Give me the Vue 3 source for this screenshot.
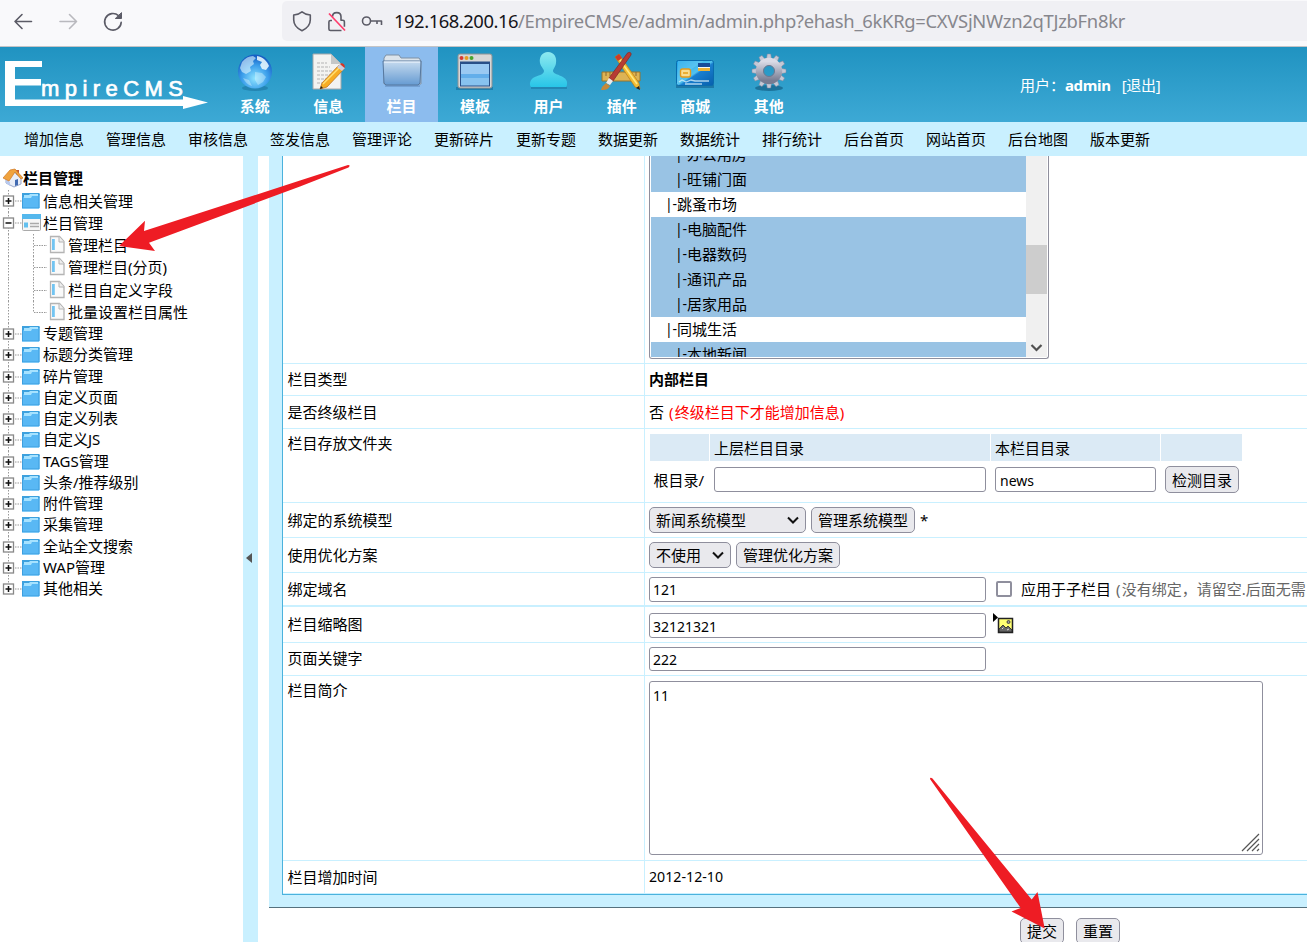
<script setup>
const menus = [
  { t: '系统', i: 'globe' }, { t: '信息', i: 'doc' }, { t: '栏目', i: 'folder', on: true }, { t: '模板', i: 'window' },
  { t: '用户', i: 'user' }, { t: '插件', i: 'tools' }, { t: '商城', i: 'card' }, { t: '其他', i: 'gear' },
]
const subnav = ['增加信息', '管理信息', '审核信息', '签发信息', '管理评论', '更新碎片', '更新专题', '数据更新', '数据统计', '排行统计', '后台首页', '网站首页', '后台地图', '版本更新']
const tree = [
  { t: '信息相关管理', k: 'top' }, { t: '栏目管理', k: 'open' },
  { t: '管理栏目', k: 'sub' }, { t: '管理栏目(分页)', k: 'sub' }, { t: '栏目自定义字段', k: 'sub' }, { t: '批量设置栏目属性', k: 'sub last' },
  ...['专题管理', '标题分类管理', '碎片管理', '自定义页面', '自定义列表', '自定义JS', 'TAGS管理', '头条/推荐级别', '附件管理', '采集管理', '全站全文搜索', 'WAP管理', '其他相关'].map((t, n) => ({ t, k: n === 12 ? 'node end' : 'node' })),
]
const options = [
  { t: '办公用房', s: 1 }, { t: '旺铺门面', s: 1 }, { t: '跳蚤市场' }, { t: '电脑配件', s: 1 }, { t: '电器数码', s: 1 },
  { t: '通讯产品', s: 1 }, { t: '居家用品', s: 1 }, { t: '同城生活' }, { t: '本地新闻', s: 1 },
]
const teeth = Array.from({ length: 12 }, (_, n) => n * 30)
</script>

<template>
  <div class="page">
    <div class="chrome">
      <svg class="nav-icons" width="282" height="46" fill="none" stroke="#5b5b66" stroke-width="1.6" stroke-linecap="round" stroke-linejoin="round">
        <path d="M31.500 21.500H15M22 14.500l-7 7 7 7" />
        <path d="M60 21.500h16.500M69.500 14.500l7 7-7 7" stroke="#b9b9be" />
        <path d="M118.500 15.700a8.300 8.300 0 1 0 2.700 6.700" />
        <path d="M121.500 13v5.500h-5.800z" fill="#5b5b66" stroke-width="1" />
      </svg>
      <div class="urlbar">
        <svg width="112" height="40" fill="none" stroke="#5b5b66" stroke-width="1.600" stroke-linejoin="round">
          <path d="M20 10.800c2.500 2.100 5.200 2.800 8.300 3.200v4.800c0 4.900-3.200 8.600-8.300 10.900-5.100-2.300-8.300-6-8.300-10.900V14c3.100-.4 5.800-1.100 8.300-3.200z" />
          <path d="M50.500 15.800c0-5.600 8.500-5.600 8.500 0v3.500h1.800c1 0 1.600.6 1.600 1.500v5M50 19.500h-1.500c-1 0-1.600.6-1.600 1.500v7c0 1 .6 1.500 1.600 1.500h11" />
          <path d="M47 12.500l16 17" stroke="#ff3b6b" stroke-width="1.700" />
          <circle cx="84.500" cy="20" r="4" />
          <path d="M88.500 20H99.500V24M95 20v3" />
        </svg>
        <span class="url"><b>192.168.200.16</b>/EmpireCMS/e/admin/admin.php?ehash_6kKRg=CXVSjNWzn2qTJzbFn8kr</span>
      </div>
    </div>

    <header class="header">
      <svg class="logo" width="218" height="75" viewBox="0 47 218 75">
        <path d="M5 61H42V67H15V79H41V85.500H15V99.500H183V96L208 102.500 183 109V106H5z" fill="#fff" />
        <text x="41" y="95.500" textLength="142" class="logo-text">mpireCMS</text>
      </svg>
      <div v-for="m in menus" :key="m.t" class="menu" :class="{ on: m.on }">
        <svg width="44" height="44" viewBox="0 0 44 44">
          <defs>
            <radialGradient id="gl" cx=".5" cy=".7" r=".65"><stop offset="0" stop-color="#8fe4ff" /><stop offset=".6" stop-color="#3a9dea" /><stop offset="1" stop-color="#175fc4" /></radialGradient>
            <linearGradient id="fo" x2="0" y2="1"><stop offset="0" stop-color="#c6dbef" /><stop offset="1" stop-color="#669bd2" /></linearGradient>
            <linearGradient id="us" x2="0" y2="1"><stop offset="0" stop-color="#8de9ef" /><stop offset="1" stop-color="#28c5e8" /></linearGradient>
            <linearGradient id="ca" x2="1" y2="1"><stop offset="0" stop-color="#16a1e8" /><stop offset=".5" stop-color="#52c2ef" /><stop offset=".55" stop-color="#197fd0" /><stop offset="1" stop-color="#075fac" /></linearGradient>
            <linearGradient id="ge" x2="0" y2="1"><stop offset="0" stop-color="#dadbe6" /><stop offset="1" stop-color="#777c92" /></linearGradient>
          </defs>
          <g v-if="m.i === 'globe'">
            <ellipse cx="22" cy="38" rx="13" ry="3" fill="#176c98" opacity=".5" />
            <circle cx="22" cy="21.500" r="17" fill="url(#gl)" />
            <path d="M9 12c3-4 7-6 11-6l3 2-3 3 1 3-4 3 1 4-5 3-4-2-2-4z" fill="#e2f7ff" opacity=".6" />
            <path d="M24 6c6 1 10 5 12 10l-3 4-4-1-2-4 2-3-5-2z" fill="#f0fbff" opacity=".85" />
            <path d="M22 22l7 1 4 4-3 5-5 3-3-5zM10 28l6 2 3 6c-4-1-7-4-9-8z" fill="#e2f7ff" opacity=".4" />
          </g>
          <g v-else-if="m.i === 'doc'">
            <path d="M7 4h18l10 10v25H7z" fill="#f3f3f1" stroke="#a6a9aa" /><path d="M25 4v10h10z" fill="#c5c7c7" />
            <path d="M11 13h10M11 17h13M11 21h16M11 25h14M11 29h11M11 33h8" stroke="#b4b4b4" stroke-width="1.200" stroke-dasharray="3 1" />
            <path d="M14 39l2-6L33 15l5 4-17 18z" fill="#f7ad24" stroke="#b96d18" stroke-width=".7" /><path d="M17 34l17-17" stroke="#ffe074" stroke-width="1.500" />
            <path d="M31 17l3-3 5 4-3 3z" fill="#ccd" /><path d="M34 14c2-2 6 1 4.500 4z" fill="#d93525" /><path d="M14 39l1-3 2 2z" fill="#222" />
          </g>
          <g v-else-if="m.i === 'folder'">
            <path d="M5 35h35v2H5z" fill="#5c86b7" opacity=".5" />
            <path d="M4 8l2-3h13l2 3h18l2 3v23H4z" fill="#dce4eb" stroke="#7e91a5" />
            <path d="M3 11h38l-1 22-2 2H6l-2-2z" fill="url(#fo)" stroke="#56789f" /><path d="M4 12h36" stroke="#f3f9ff" />
          </g>
          <g v-else-if="m.i === 'window'">
            <path d="M3 37h37v3H3z" fill="#136b98" opacity=".6" />
            <rect x="5" y="4" width="34" height="34" rx="2" fill="#d7d7d7" stroke="#8d9294" />
            <circle cx="8.500" cy="8" r="2" fill="#d63b33" /><circle cx="13.500" cy="8" r="2" fill="#e89b23" /><circle cx="18.500" cy="8" r="2" fill="#48a52e" />
            <rect x="7.500" y="12" width="29" height="24" fill="#88c3ef" stroke="#294f87" /><path d="M8 12h28v2H8z" fill="#294f87" /><path d="M8 14h28v10H8z" fill="#9ac9f2" /><path d="M8 24h28v4H8z" fill="#63aeea" />
          </g>
          <g v-else-if="m.i === 'user'">
            <path d="M5 37h36v2H5z" fill="#156f9b" opacity=".5" />
            <path d="M22 2c6 0 9 5 8 11-.5 4-3 6-3 8 0 4 13 4 14 11 0 3 0 4-1 5H5c-2-2-1-7 2-9 5-3 11-3 11-7 0-2-3-4-4-8-1-6 2-11 8-11z" fill="url(#us)" />
          </g>
          <g v-else-if="m.i === 'tools'">
            <path d="M2 22h38v9H2z" fill="#ddb355" stroke="#9a752b" /><path d="M6 22v4M10 22v4M14 22v4M31 22v4M36 22v4" stroke="#8d6b30" />
            <path d="M15 7l4-3 20 29 1 6-5-2z" fill="#f3bd32" stroke="#b67818" stroke-width=".7" /><path d="M15 7l4-3 3 4-4 3z" fill="#cc3b2a" /><path d="M20 10l17 24" stroke="#ffe784" stroke-width="1.500" />
            <path d="M26 5c2-4 6-3 5 0L13 31l-4-3z" fill="#b73b33" stroke="#7f2925" stroke-width=".7" /><path d="M9 28l4 3-3 4-4-2z" fill="#ececec" /><path d="M6 33l4 3c-2 4-5 4-9 4l1-3z" fill="#c5893a" /><path d="M36 38l4 2-1-4z" fill="#222" />
          </g>
          <g v-else-if="m.i === 'card'">
            <path d="M3 35h38v3H3z" fill="#10618f" opacity=".6" />
            <rect x="3.500" y="10.500" width="37" height="25" rx="2" fill="url(#ca)" stroke="#096cae" />
            <path d="M4 35C11 22 22 17 31 11H5z" fill="#8edcf8" opacity=".3" />
            <rect x="25" y="13" width="12" height="8" fill="#f4f8fa" /><path d="M25 13h12v4H25z" fill="#174d9a" /><path d="M25 18h12v3H25z" fill="#ecb338" />
            <rect x="7.500" y="19" width="10" height="8" rx="2" fill="#f7dc92" stroke="#e39b1c" stroke-width="1.400" /><path d="M10 22h5v2h-5z" fill="#eaae35" />
            <path d="M6 32l3-2 4 2 5-2 4 1h14M12 34h17" fill="none" stroke="#ddf4fb" stroke-width="1.300" opacity=".75" />
          </g>
          <g v-else>
            <ellipse cx="22" cy="38" rx="14" ry="3" fill="#145f86" opacity=".7" />
            <path v-for="a in teeth" :key="a" d="M20.300 4h3.400l1 6h-5.400z" :transform="`rotate(${a} 22 21)`" fill="#c5c8d5" stroke="#8589a0" stroke-width=".5" />
            <circle cx="22" cy="21" r="9.500" fill="none" stroke="url(#ge)" stroke-width="7.500" /><circle cx="22" cy="21" r="5.500" fill="none" stroke="#72788e" />
          </g>
        </svg>
        <span>{{ m.t }}</span>
      </div>
      <div class="account">用户：<b>admin</b><span>[退出]</span></div>
    </header>

    <nav class="subnav"><span v-for="s in subnav" :key="s">{{ s }}</span></nav>

    <main class="main">
      <aside class="side">
        <div class="side-title">
          <svg width="20" height="20" viewBox="0 0 20 20"><path d="M3 9l8-5 7 6v6l-7 3-8-4z" fill="#e9eef8" stroke="#9aa9cb" /><path d="M3 11l4 3v4l-4-3z" fill="#b8c9ee" /><path d="M13 2h3v6l-3-2z" fill="#c45c32" /><path d="M0 10L7 2l5-1 8 9-2 1-6-7-6 9z" fill="#f0a33e" stroke="#cf7722" stroke-width=".7" /><path d="M12 12l3-1v6l-3 1z" fill="#426bb2" /></svg>
          <b>栏目管理</b>
        </div>
        <div v-for="r in tree" :key="r.k + r.t" class="row" :class="r.k">
          <svg v-if="r.k.startsWith('sub')" width="68" height="23" viewBox="0 0 68 23" fill="none">
            <path d="M8.500 0v23" stroke="#999" stroke-dasharray="1.500 1.500" />
            <path :d="r.k === 'sub last' ? 'M33.500 0v11.500' : 'M33.500 0v23'" stroke="#999" stroke-dasharray="1.500 1.500" /><path d="M34 11.500h13" stroke="#999" stroke-dasharray="1.500 1" />
            <path d="M50.500 2.500h9l4.500 5v11h-13.500z" fill="#fafafa" stroke="#b4b4b4" stroke-width="1.300" /><path d="M59 2.500v5.500h5" fill="#eee" stroke="#b4b4b4" /><path d="M52 5h2.800v11H52z" fill="#72c4f2" />
          </svg>
          <svg v-else width="43" height="22" viewBox="0 0 43 22" fill="none">
            <path :d="r.k.includes('end') ? 'M8.500 0v10' : 'M8.500 0v22'" stroke="#999" stroke-dasharray="1.500 1.500" /><path d="M15 11h7" stroke="#999" stroke-dasharray="1.500 1" />
            <rect x="3.500" y="6" width="10" height="10" fill="#fff" stroke="#888" stroke-width="1.300" />
            <path :d="r.k === 'open' ? 'M5.500 11h6' : 'M5.500 11h6M8.500 8v6'" stroke="#111" stroke-width="1.500" />
            <g v-if="r.k === 'open'"><rect x="22.500" y="2.500" width="18" height="16" rx="1" fill="#f6f6f6" stroke="#aaa" /><path d="M22 2h19v5H22z" fill="#55b8ed" /><path d="M24 10.500h4v5h-4z" fill="#63c0ef" /><path d="M30 11.500h9M30 14.500h9" stroke="#aaa" stroke-width="1.300" /></g>
            <g v-else><path d="M22 4l1-1h15.500l1 1v14l-1 1H23l-1-1z" fill="#59b8f4" /><path d="M22.500 4V18h16.500V4" stroke="#3d9fdf" /><path d="M22 3h17.500v2H31l-2 2h-7z" fill="#3da1de" /><path d="M24 5h5l1-1h8v2h-6l-1 2h-7z" fill="#a6e2ff" /><path d="M22.500 18.500h16.500" stroke="#82c9f5" /></g>
          </svg>
          <span>{{ r.t }}</span>
        </div>
      </aside>
      <div class="splitter"><i></i></div>

      <section class="content">
        <div class="frame">
          <div class="form">
            <div class="line r1"><label></label><div class="cell">
              <div class="listbox">
                <div class="opts"><div v-for="o in options" :key="o.t" :class="{ sel: o.s }"><i>|-</i>{{ o.t }}</div></div>
                <div class="scroll"><div class="thumb"></div><svg width="21" height="20" fill="none" stroke="#505050" stroke-width="2.200"><path d="M5.500 8l5 5 5-5" /></svg></div>
              </div>
            </div></div>
            <div class="line r2"><label>栏目类型</label><div class="cell"><b>内部栏目</b></div></div>
            <div class="line r3"><label>是否终级栏目</label><div class="cell">否<span class="red"><i>(</i>终级栏目下才能增加信息<i>)</i></span></div></div>
            <div class="line r4 top"><label>栏目存放文件夹</label><div class="cell">
              <div class="dirs">
                <div class="th"></div><div class="th">上层栏目目录</div><div class="th">本栏目目录</div><div class="th"></div>
                <div class="td">根目录/</div><div class="td"><div class="input w272"></div></div><div class="td"><div class="input w161">news</div></div><div class="td"><div class="btn w74">检测目录</div></div>
              </div>
            </div></div>
            <div class="line r5"><label>绑定的系统模型</label><div class="cell"><div class="btn select w157">新闻系统模型<svg width="14" height="10"><path d="M2 2.500l5 5 5-5" /></svg></div><div class="btn w104">管理系统模型</div><span>*</span></div></div>
            <div class="line r6"><label>使用优化方案</label><div class="cell"><div class="btn select w82">不使用<svg width="14" height="10"><path d="M2 2.500l5 5 5-5" /></svg></div><div class="btn w104">管理优化方案</div></div></div>
            <div class="line r7"><label>绑定域名</label><div class="cell"><div class="input w337">121</div><i class="check"></i>应用于子栏目<span class="grey"><i>(</i>没有绑定，请留空.后面无需</span></div></div>
            <div class="line r8"><label>栏目缩略图</label><div class="cell"><div class="input w337">32121321</div>
              <svg class="pic" width="22" height="22"><path d="M0 0l5 4.500L0 9z" fill="#000" /><rect x="5.500" y="5.500" width="14" height="14" fill="#ffff72" stroke="#222" stroke-width="1.500" /><circle cx="15.500" cy="9" r="1.500" fill="#999" stroke="#444" /><path d="M6 19v-3l4-4 3 3 2-2 4 4v2z" fill="#666" stroke="#222" stroke-width=".8" /><path d="M9 16l1.500-1.500M14 17l2-1" stroke="#ddd" /></svg>
            </div></div>
            <div class="line r9"><label>页面关键字</label><div class="cell"><div class="input w337">222</div></div></div>
            <div class="line r10 top"><label>栏目简介</label><div class="cell"><div class="area">11<svg width="20" height="20" stroke="#555" stroke-width="1.200"><path d="M1 18L18 1M6 18L18 6M11 18l7-7M16 18l2-2" /></svg></div></div></div>
            <div class="line r11"><label>栏目增加时间</label><div class="cell num">2012-12-10</div></div>
          </div>
        </div>
        <div class="actions"><div class="btn w44">提交</div><div class="btn w44">重置</div></div>
      </section>
    </main>
    <svg class="overlay" width="1307" height="942" fill="#ee1c24">
      <path d="M119 246L145 220.700 144 231 300 180.500 348 165Q351 165 348.500 167.500L300 186.500 149 242.700 155 251z" />
      <path d="M930 779Q930 777 932.500 778.500L1031.700 899.500 1037.500 892 1044.700 928.500 1011.500 911.500 1020.700 908z" />
    </svg>
  </div>
</template>

<style>
body { margin: 0; overflow: hidden; }
</style>
<style scoped>
.page { position: relative; width: 1307px; height: 942px; overflow: hidden; background: #fff; color: #000; font: 15px/20px "Noto Sans", "Noto Sans CJK SC", sans-serif; display: flex; flex-direction: column; white-space: nowrap; }
.page * { box-sizing: border-box; }
i { font-style: normal; }
svg { display: block; flex: none; }
.chrome { height: 47px; flex: none; display: flex; background: #f9f9fb; border-bottom: 1px solid #c4c4c6; }
.urlbar { margin-top: 1px; height: 40px; flex: 1; background: #f0f0f4; border-radius: 5px 0 0 5px; display: flex; align-items: center; overflow: hidden; }
.url { font: 18.4px/40px "Noto Sans", sans-serif; color: #87878d; letter-spacing: -.29px; }
.url b { font-weight: 400; color: #15141a; letter-spacing: -.46px; }
.header { height: 75px; flex: none; display: flex; background: linear-gradient(#2093c1, #3da9d5); color: #fff; }
.logo-text { font: 22px "Liberation Sans", sans-serif; fill: #fff; stroke: #fff; stroke-width: .7px; }
.menu { width: 73.430px; display: flex; flex-direction: column; align-items: center; padding-top: 3px; font-weight: 700; }
.menu span { line-height: 20px; margin-top: 2px; }
.menu.on { background: #8cbcee; }
.account { margin-left: 214.500px; margin-top: 28px; }
.account b { margin-right: 11px; letter-spacing: -.3px; }
.account span { letter-spacing: -.3px; }
.subnav { height: 34px; flex: none; background: #c9f0ff; padding-left: 24px; display: flex; gap: 22px; line-height: 35px; }
.subnav span { width: 60px; }
.main { flex: 1; display: flex; min-height: 0; }
.side { width: 243px; padding-top: 12px; }
.side-title { display: flex; align-items: flex-start; height: 22px; padding-left: 3px; }
.row { display: flex; height: 21.250px; line-height: 21px; overflow: hidden; }
.row.top { height: 22px; line-height: 22px; }
.row.open { height: 22px; line-height: 22px; }
.row.sub { height: 22.250px; line-height: 22px; }
.splitter { width: 15px; background: #c9f0ff; padding: 397px 0 0 3px; }
.splitter i { display: block; width: 0; border: 5px solid transparent; border-left: 0; border-right: 6px solid #555; }
.content { flex: 1; padding-left: 11px; min-width: 0; overflow: hidden; }
.frame { background: #c9f0ff; padding: 0 0 12px 13px; border-bottom: 1px solid #55717e; height: 752px; }
.form { background: #fff; border-left: 1px solid #4bb2dd; border-bottom: 1px solid #4bb2dd; height: 739px; }
.line { display: flex; border-bottom: 1px solid #c9f0ff; }
.line label { width: 362px; flex: none; border-right: 1px solid #c9f0ff; padding-left: 4.500px; display: flex; align-items: center; }
.cell { flex: 1; min-width: 0; padding-left: 4px; display: flex; align-items: center; }
.top label { align-items: flex-start; padding-top: 4px; }
.top .cell { align-items: flex-start; }
.r1 { height: 208px; } .r2 { height: 32px; } .r3 { height: 33px; } .r4 { height: 74px; } .r5, .r6 { height: 35px; } .r7 { height: 34px; border-bottom-width: 2px; } .r8 { height: 36px; } .r9 { height: 33px; } .r10 { height: 185px; } .r11 { height: 33px; }
.r2 label, .r2 b, .r8 label, .r9 label { padding-bottom: 2px; }
.r1 .cell { align-items: flex-start; }
.listbox { width: 400px; height: 203px; border: 1px solid #8f8f9d; border-top: 0; border-radius: 0 0 3px 3px; padding: 0 1px 1px; display: flex; }
.opts { width: 375px; height: 201px; overflow: hidden; display: flex; flex-direction: column; justify-content: flex-start; }
.opts div { height: 25px; flex: none; line-height: 24px; padding-left: 14px; display: flex; }
.opts div:first-child { margin-top: -14px; }
.opts .sel { background: #99c3e4; padding-left: 24px; }
.opts i { width: 12px; font-size: 14px; letter-spacing: -.3px; }
.scroll { width: 21px; height: 201px; background: #f0f0f0; padding-top: 89px; display: flex; flex-direction: column; justify-content: space-between; }
.thumb { height: 49px; background: #cdcdcd; }
.red { color: #f00; margin-left: 5px; }
.red i { display: inline-block; width: 5.700px; }
.dirs { display: grid; grid-template-columns: 59px 280px 169px 81px; column-gap: 1px; padding: 5px 0 0 1px; grid-template-rows: 27px 38px; }
.th { background: #dbeaf5; padding-left: 4px; line-height: 29px; }
.td { padding-left: 4px; display: flex; align-items: center; }
.td:nth-child(5) { padding-left: 3.500px; }
.td .input, .td .btn { margin-top: -1px; }
.input { height: 25px; flex: none; border: 1px solid #8f8f9d; border-radius: 3px; font-size: 14px; line-height: 24px; padding-left: 3px; background: #fff; }
.td .input { padding-left: 4px; line-height: 25px; }
.btn { height: 26px; flex: none; border: 1px solid #8f8f9d; border-radius: 5px; background: #e9e9ed; display: flex; align-items: center; justify-content: center; }
.td .btn { height: 27px; }
.select { justify-content: space-between; padding: 0 5px 0 6px; margin-right: 5px; }
.select svg { fill: none; stroke: #111; stroke-width: 2; }
.w272 { width: 272px; } .w161 { width: 161px; } .w74 { width: 74px; } .w157 { width: 157px; } .w104 { width: 104px; } .w82 { width: 82px; } .w337 { width: 337px; } .w44 { width: 44px; }
.r5 span { margin-left: 5px; }
.check { width: 16px; height: 16px; flex: none; border: 2px solid #8f8f9d; border-radius: 2px; margin: 0 9px 0 10px; background: #fff; }
.grey { color: #666; margin-left: 5px; }
.grey i { display: inline-block; width: 5.700px; }
.r8 .input { margin-top: 2px; line-height: 25px; }
.pic { margin: -1px 0 0 7px; }
.r9 .input { height: 24px; }
.area { position: relative; margin-top: 5px; width: 614px; height: 174px; border: 1px solid #8f8f9d; border-radius: 3px; padding: 4px 3px; font-size: 14px; }
.area svg { position: absolute; right: 1px; bottom: 1px; }
.num { font-size: 14.200px; }
.actions { display: flex; gap: 12px; padding: 10px 0 0 751px; }
.overlay { position: absolute; left: 0; top: 0; pointer-events: none; }
</style>
